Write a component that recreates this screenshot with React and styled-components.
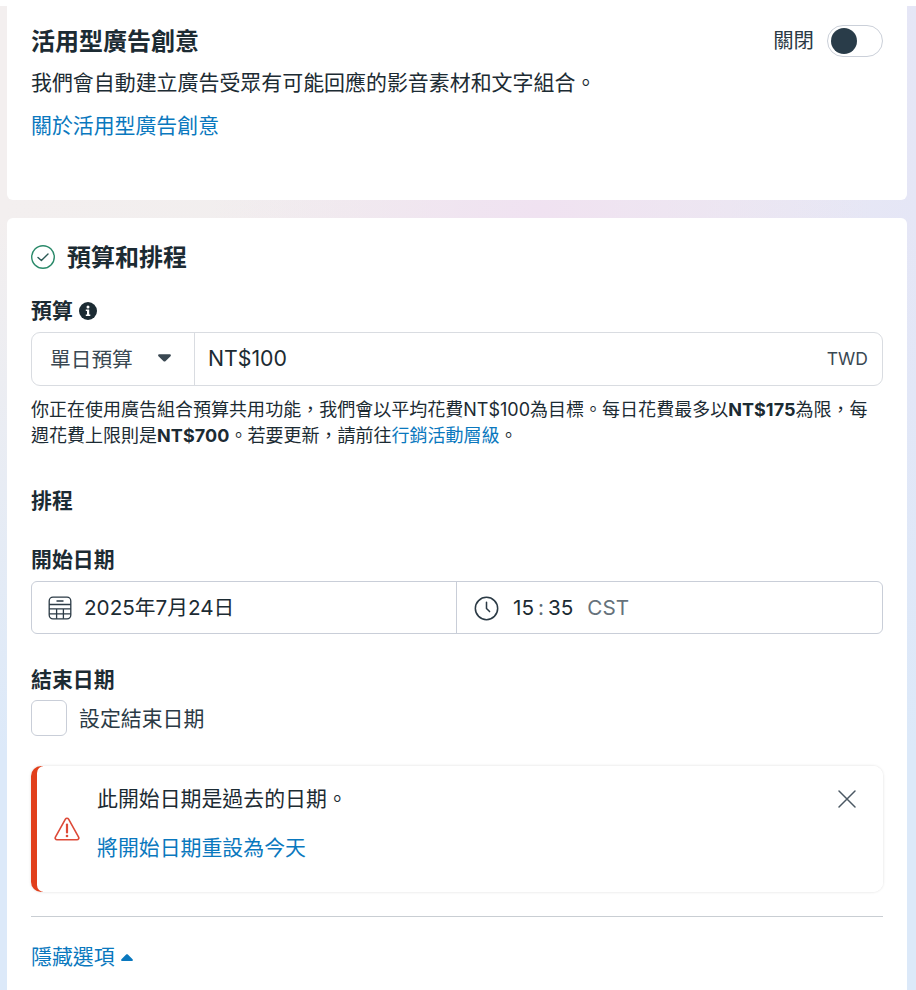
import React from "react";
import styled, { createGlobalStyle } from "styled-components";

const Global = createGlobalStyle`
  html, body { margin: 0; padding: 0; background: #fff; }
  body { font-family: Inter, "Noto Sans CJK TC", sans-serif; color: #1c2b33; }
  * { box-sizing: border-box; }
`;

const Page = styled.div`
  width: 916px;
  height: 990px;
  overflow: hidden;
  background:
    linear-gradient(180deg, rgba(220, 233, 249, 0) 22%, rgba(220, 233, 249, 1) 76%),
    radial-gradient(ellipse 330px 170px at 540px 209px, rgba(240, 226, 241, 1), rgba(240, 226, 241, 0) 100%),
    linear-gradient(90deg, #f3efef 0%, #f1eeee 45%, #e5e6f6 100%);
`;

const TopStrip = styled.div`
  height: 6px;
  background: #fff;
`;

const Card = styled.section`
  width: 900px;
  margin-left: 7px;
  background: #fff;
  border-radius: ${(p) => (p.$flatTop ? "0 0 6px 6px" : "6px 6px 0 0")};
  padding: ${(p) => p.$pad};
  height: ${(p) => p.$h};
  margin-top: ${(p) => p.$mt || "0"};
`;

const TitleRow = styled.div`
  display: flex;
  align-items: center;
  justify-content: space-between;
  height: 32px;
`;

const CardTitle = styled.h2`
  margin: 0;
  padding-top: 2px;
  font-size: 24px;
  line-height: 32px;
  font-weight: 700;
  color: #1c2b33;
`;

const ToggleWrap = styled.div`
  display: flex;
  align-items: center;
  gap: 13px;
`;

const ToggleLabel = styled.span`
  font-size: 20.4px;
  line-height: 28px;
  color: #2b3a45;
`;

const ToggleTrack = styled.div`
  width: 56px;
  height: 32px;
  border-radius: 16px;
  border: 1px solid #cbd0d9;
  background: #fff;
  padding: 2px 3px;
`;

const ToggleKnob = styled.div`
  width: 26px;
  height: 26px;
  border-radius: 50%;
  background: #293c49;
`;

const Body = styled.p`
  margin: 12px 0 0;
  font-size: 20.95px;
  line-height: 28px;
  color: #1c2b33;
`;

const LinkLine = styled.a`
  display: block;
  margin-top: 14px;
  padding-top: 1px;
  font-size: 20.9px;
  line-height: 28px;
  color: #0a78be;
`;

const SectionHead = styled.div`
  display: flex;
  align-items: center;
  gap: 12px;
  height: 32px;
`;

const FieldLabel = styled.div`
  display: flex;
  align-items: center;
  gap: 6px;
  font-size: 20.9px;
  line-height: 28px;
  font-weight: 700;
  color: #1c2b33;
  margin-top: ${(p) => p.$mt};
`;

const BudgetBox = styled.div`
  display: flex;
  align-items: stretch;
  height: 54px;
  margin-top: 7px;
  border: 1px solid #d9dce1;
  border-radius: 9px;
`;

const BudgetSelect = styled.div`
  width: 163px;
  flex: none;
  display: flex;
  align-items: center;
  justify-content: space-between;
  padding: 0 23px 2px 18px;
  border-right: 1px solid #d9dce1;
  font-size: 20.7px;
  color: #3a4852;
`;

const BudgetValue = styled.div`
  flex: 1;
  display: flex;
  align-items: center;
  justify-content: space-between;
  padding: 0 14px 2px 13px;
  font-size: 21.3px;
  color: #1c2b33;
`;

const Currency = styled.span`
  font-size: 17.5px;
  color: #3a4852;
`;

const Helper = styled.p`
  margin: 11px 0 0;
  font-size: 18px;
  line-height: 26px;
  letter-spacing: 0.01px;
  color: #1c2b33;
  b { font-weight: 700; letter-spacing: 0.05px; }
  a { color: #0a78be; }
`;

const DateBox = styled.div`
  display: grid;
  grid-template-columns: 424px 1fr;
  height: 53px;
  margin-top: 7px;
  border: 1px solid #c9ced8;
  border-radius: 6px;
`;

const DateCell = styled.div`
  display: flex;
  align-items: center;
  gap: ${(p) => p.$gap};
  padding-left: ${(p) => p.$pl};
  padding-top: 1px;
  font-size: 20.7px;
  line-height: 28px;
  color: #1c2b33;
  & + & { border-left: 1px solid #c9ced8; }
`;

const Colon = styled.span`
  margin: 0 4px;
  color: #5d6b75;
`;

const Zone = styled.span`
  color: #66727b;
`;

const CheckRow = styled.label`
  display: flex;
  align-items: center;
  gap: 12px;
  margin-top: 6px;
  font-size: 20.9px;
  color: #2b3a45;
`;

const CheckText = styled.span`
  margin-top: -2px;
`;

const CheckBox = styled.span`
  width: 36px;
  height: 36px;
  border: 1px solid #c9ced8;
  border-radius: 6px;
  background: #fff;
`;

const Alert = styled.div`
  position: relative;
  display: flex;
  height: 126px;
  margin-top: 30px;
  border-radius: 10px;
  background: linear-gradient(90deg, #e13f1b 12px, #fff 12px);
  box-shadow: 0 0 3px rgba(0, 0, 0, 0.14);
`;

const AlertInner = styled.div`
  flex: 1;
  margin-left: 6px;
  display: flex;
  background: #fff;
  border-radius: 7px 10px 10px 7px;
`;

const AlertIconCol = styled.div`
  width: 60px;
  flex: none;
  display: flex;
  align-items: center;
  justify-content: center;
  padding-right: 1px;
`;

const AlertText = styled.div`
  flex: 1;
  padding-top: 19px;
  font-size: 20.9px;
  line-height: 28px;
  color: #1c2b33;
`;

const AlertLink = styled.a`
  display: block;
  margin-top: 21px;
  color: #0a78be;
`;

const CloseButton = styled.span`
  position: absolute;
  top: 23px;
  right: 26px;
  display: flex;
`;

const Rule = styled.hr`
  margin: 24px 0 0;
  border: 0;
  border-top: 1px solid #c9ced3;
`;

const MoreLink = styled.a`
  display: flex;
  align-items: center;
  gap: 6px;
  margin-top: 26px;
  font-size: 20.9px;
  line-height: 28px;
  color: #0a78be;
`;

const CheckCircle = () => (
  <svg width="24" height="24" viewBox="0 0 24 24" fill="none">
    <circle cx="12" cy="12" r="11.3" stroke="#2b8a6a" strokeWidth="1.4" />
    <path d="M7 12.4l3.4 3.2L17 9" stroke="#2b5a55" strokeWidth="1.4" strokeLinecap="round" strokeLinejoin="round" />
  </svg>
);

const InfoIcon = () => (
  <svg width="18" height="18" viewBox="0 0 18 18">
    <circle cx="9" cy="9" r="9" fill="#1c2b33" />
    <circle cx="9" cy="4.9" r="1.5" fill="#fff" />
    <path d="M6.8 7.4h3.4v5.1h1.1v1.6H6.8v-1.6h1.2V9H6.8z" fill="#fff" />
  </svg>
);

const Caret = ({ color, up, w = 13, h = 8 }) => (
  <svg width={w} height={h} viewBox="0 0 14 8" style={up ? { transform: "rotate(180deg)" } : undefined}>
    <path d="M1.5 0h11c1.2 0 1.8 1.2 1 2.1L8 7.4c-.6.6-1.4.6-2 0L.5 2.1C-.3 1.2.3 0 1.5 0z" fill={color} />
  </svg>
);

const CalendarIcon = () => (
  <svg width="24" height="24" viewBox="0 0 24 24" fill="none" stroke="#2b3a45" strokeWidth="1.3">
    <rect x="1.2" y="1.2" width="21.6" height="21.6" rx="3.8" />
    <path d="M1.2 8.5h21.6M1.2 12.8h21.6M1.2 17.8h21.6M8.6 12.8v10M15.4 12.8v10M8.5 5h7" />
  </svg>
);

const ClockIcon = () => (
  <svg width="25" height="25" viewBox="0 0 26 26" fill="none" stroke="#2b3a45" strokeWidth="1.6">
    <circle cx="13" cy="13" r="11.6" />
    <path d="M13 6.5v6.5l3.2 3.2" strokeLinecap="round" strokeLinejoin="round" />
  </svg>
);

const WarningIcon = () => (
  <svg width="26" height="24" viewBox="0 0 26 24" fill="none" stroke="#dd4a38" strokeWidth="1.6" strokeLinejoin="round">
    <path d="M11.4 2.2c.7-1.2 2.5-1.2 3.2 0l10 18c.7 1.2-.2 2.6-1.6 2.6H3c-1.4 0-2.3-1.4-1.6-2.6z" />
    <path d="M13 7.5v8" strokeWidth="2.2" strokeLinecap="round" />
    <circle cx="13" cy="19" r="1.3" fill="#dd4a38" stroke="none" />
  </svg>
);

const CloseIcon = () => (
  <svg width="20" height="20" viewBox="0 0 20 20" fill="none" stroke="#4b5863" strokeWidth="1.5" strokeLinecap="round">
    <path d="M2 2l16 16M18 2L2 18" />
  </svg>
);

export default function App() {
  return (
    <Page lang="zh-Hant">
      <Global />
      <TopStrip />
      <Card $flatTop $pad="19px 24px 0" $h="194px">
        <TitleRow>
          <CardTitle>活用型廣告創意</CardTitle>
          <ToggleWrap>
            <ToggleLabel>關閉</ToggleLabel>
            <ToggleTrack>
              <ToggleKnob />
            </ToggleTrack>
          </ToggleWrap>
        </TitleRow>
        <Body>我們會自動建立廣告受眾有可能回應的影音素材和文字組合。</Body>
        <LinkLine>關於活用型廣告創意</LinkLine>
      </Card>
      <Card $pad="23px 24px 0" $h="790px" $mt="18px">
        <SectionHead>
          <CheckCircle />
          <CardTitle>預算和排程</CardTitle>
        </SectionHead>
        <FieldLabel $mt="24px">
          預算 <InfoIcon />
        </FieldLabel>
        <BudgetBox>
          <BudgetSelect>
            單日預算
            <Caret color="#3a4852" />
          </BudgetSelect>
          <BudgetValue>
            NT$100
            <Currency>TWD</Currency>
          </BudgetValue>
        </BudgetBox>
        <Helper>
          你正在使用廣告組合預算共用功能，我們會以平均花費NT$100為目標。每日花費最多以<b>NT$175</b>為限，每週花費上限則是<b>NT$700</b>。若要更新，請前往<a>行銷活動層級</a>。
        </Helper>
        <FieldLabel $mt="38px">排程</FieldLabel>
        <FieldLabel $mt="31px">開始日期</FieldLabel>
        <DateBox>
          <DateCell $gap="12px" $pl="16px">
            <CalendarIcon />
            2025年7月24日
          </DateCell>
          <DateCell $gap="14px" $pl="17px">
            <ClockIcon />
            <span>
              15<Colon>:</Colon>35
            </span>
            <Zone>CST</Zone>
          </DateCell>
        </DateBox>
        <FieldLabel $mt="32px">結束日期</FieldLabel>
        <CheckRow>
          <CheckBox />
          <CheckText>設定結束日期</CheckText>
        </CheckRow>
        <Alert>
          <AlertInner>
            <AlertIconCol>
              <WarningIcon />
            </AlertIconCol>
            <AlertText>
              此開始日期是過去的日期。
              <AlertLink>將開始日期重設為今天</AlertLink>
            </AlertText>
          </AlertInner>
          <CloseButton>
            <CloseIcon />
          </CloseButton>
        </Alert>
        <Rule />
        <MoreLink>
          隱藏選項
          <Caret color="#0a78be" up w={12} h={7} />
        </MoreLink>
      </Card>
    </Page>
  );
}
